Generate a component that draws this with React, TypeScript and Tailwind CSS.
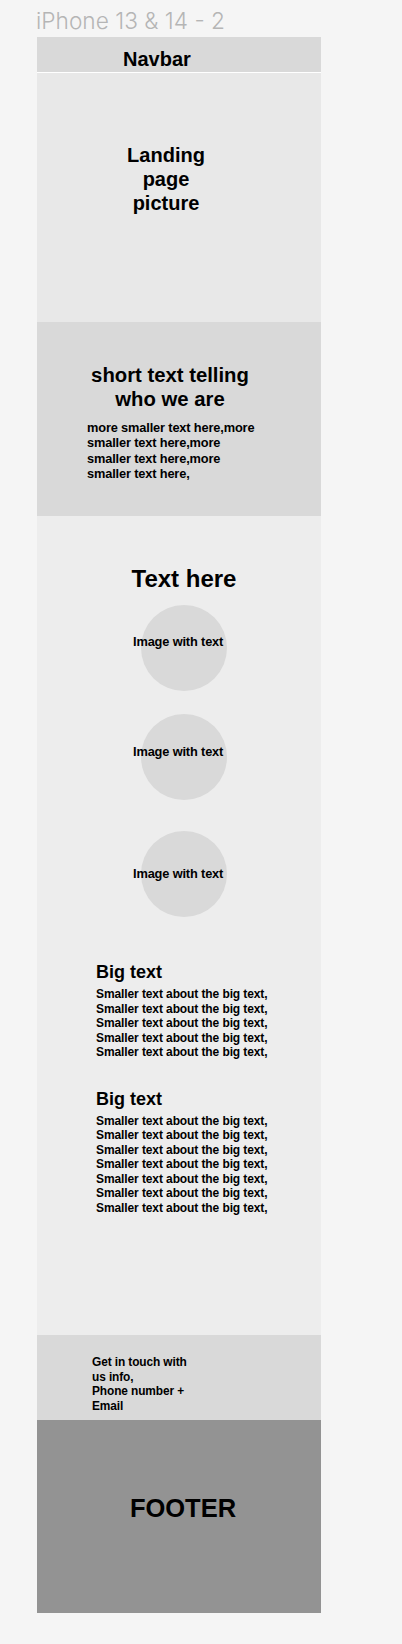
const circles = [
  { mt: "mt-[12px]", textTop: "top-[29px]" },
  { mt: "mt-[23px]", textTop: "top-[30px]" },
  { mt: "mt-[31px]", textTop: "top-[35px]" },
]

function CircleImage({ mt, textTop }: { mt: string; textTop: string }) {
  return (
    <div className={`relative ml-[104px] h-[86px] w-[86px] rounded-full bg-[#d9d9d9] ${mt}`}>
      <span className={`absolute left-[-8px] whitespace-nowrap text-[12.8px] leading-[15px] tracking-[-0.15px] font-bold text-black ${textTop}`}>
        Image with text
      </span>
    </div>
  )
}

function BigText({ lines, mt }: { lines: number; mt: string }) {
  return (
    <div className={`ml-[59px] ${mt}`}>
      <h3 className="text-[18px] leading-[22px] font-bold text-black">Big text</h3>
      <p className="mt-[4px] w-[200px] text-[12px] leading-[14.5px] tracking-[-0.1px] font-bold text-black">
        {Array.from({ length: lines }).map((_, i) => (
          <span key={i} className="block">Smaller text about the big text,</span>
        ))}
      </p>
    </div>
  )
}

export default function App() {
  return (
    <div className="min-h-[1644px] bg-[#f5f5f5] font-['Liberation_Sans',Arial,sans-serif]">
      {/* Frame title */}
      <div className="h-[37px] pl-[36px] pt-[7px]">
        <p className="font-['Inter',sans-serif] text-[22.7px] leading-[28px] font-light text-[#b5b5b5]">
          iPhone 13 &amp; 14 - 2
        </p>
      </div>

      <div className="ml-[37px] w-[284px] flex flex-col">
        {/* Navbar */}
        <div className="h-[36px] bg-[#d9d9d9] border-b border-white pt-[10px] pl-[86px]">
          <p className="text-[20px] leading-[24px] font-bold text-black">Navbar</p>
        </div>

        {/* Landing picture */}
        <div className="h-[249px] bg-[#e8e8e8] pt-[70px]">
          <p className="ml-[79px] w-[100px] text-center text-[20px] leading-[24px] font-bold text-black">
            Landing page picture
          </p>
        </div>

        {/* About */}
        <div className="h-[194px] bg-[#d9d9d9] pt-[41px] pl-[50px]">
          <h2 className="w-[166px] text-center text-[20.3px] leading-[24px] font-bold text-black">
            short text telling who we are
          </h2>
          <p className="mt-[9px] w-[176px] text-[12.8px] leading-[15.3px] tracking-[-0.15px] font-bold text-black">
            more smaller text here,more smaller text here,more smaller text here,more smaller text here,
          </p>
        </div>

        {/* Main content */}
        <div className="h-[819px] bg-[#ededed] pt-[48px]">
          <h2 className="pl-[10px] text-center text-[24px] leading-[29px] font-bold text-black">Text here</h2>
          {circles.map((c, i) => (
            <CircleImage key={i} mt={c.mt} textTop={c.textTop} />
          ))}
          <BigText lines={5} mt="mt-[44px]" />
          <BigText lines={7} mt="mt-[28px]" />
        </div>

        {/* Contact */}
        <div className="h-[85px] bg-[#d9d9d9] pt-[20px] pl-[55px]">
          <p className="w-[110px] text-[11.9px] leading-[14.5px] tracking-[-0.1px] font-bold text-black">
            Get in touch with us info,
            <br />
            Phone number + Email
          </p>
        </div>

        {/* Footer */}
        <div className="h-[193px] bg-[#939393] pt-[73px] pl-[8px]">
          <p className="text-center text-[25.5px] leading-[30px] font-bold text-black">FOOTER</p>
        </div>
      </div>
    </div>
  )
}
